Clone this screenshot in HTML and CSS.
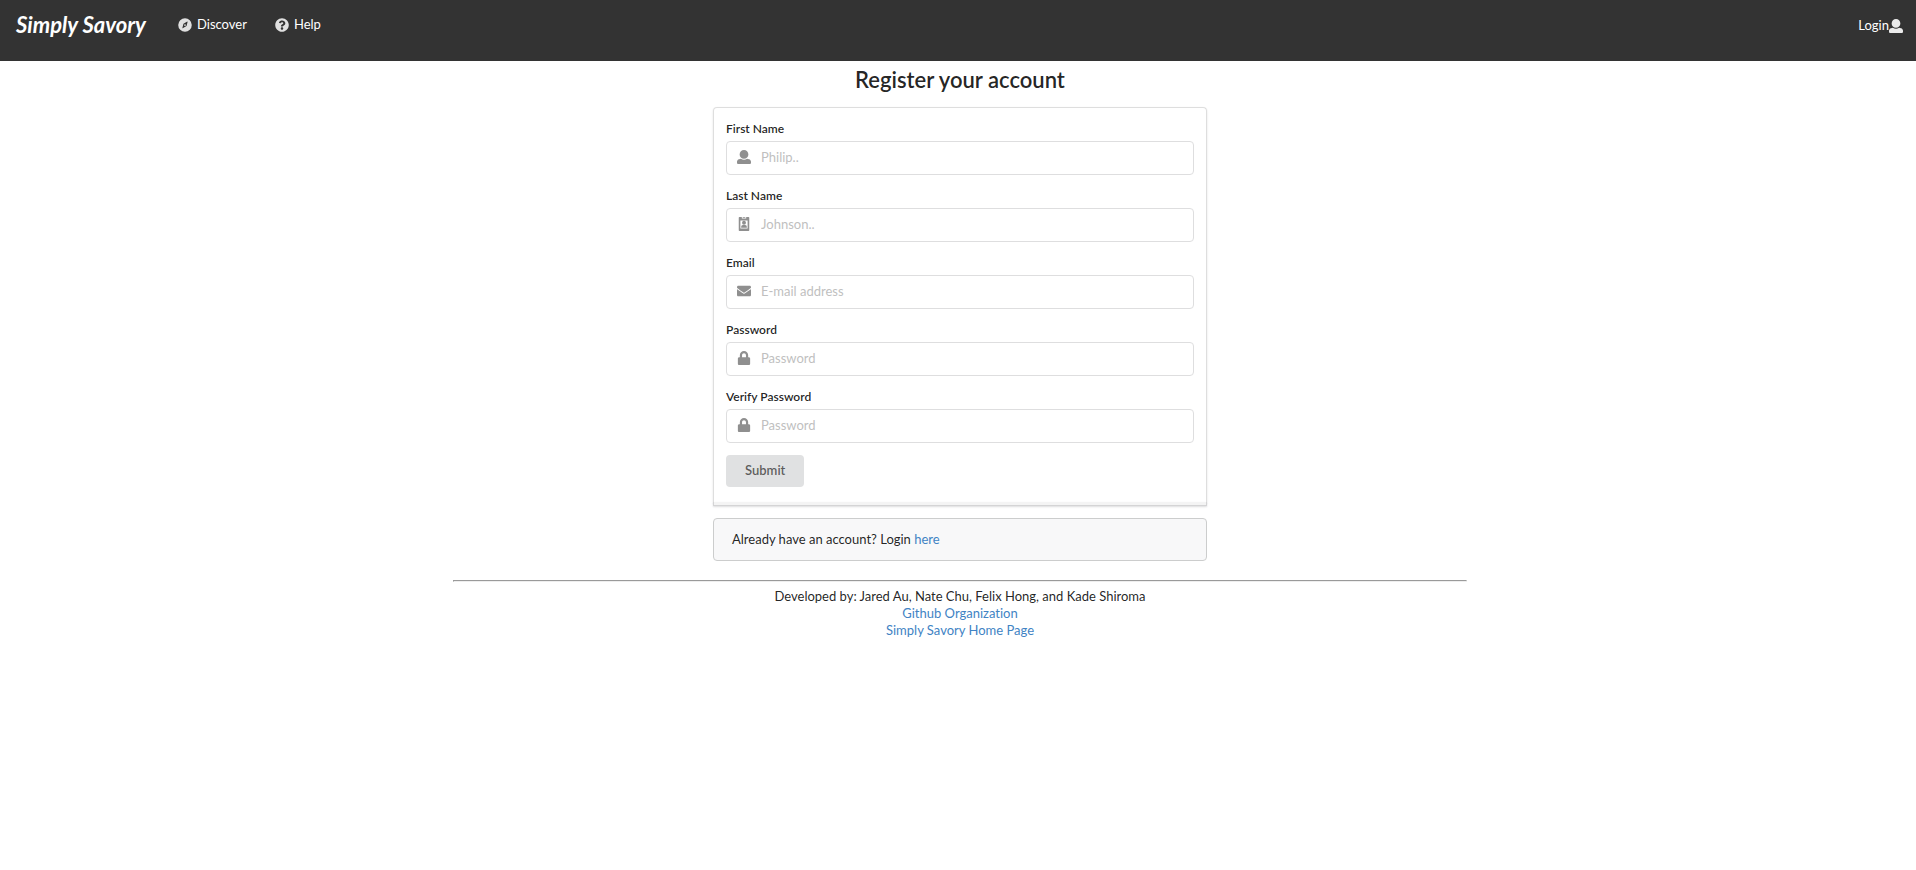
FILE: index.html
```html
<!DOCTYPE html>
<html lang="en">
<head>
<meta charset="utf-8">
<title>Simply Savory</title>
<link rel="stylesheet" href="styles.css">
</head>
<body>
<header class="navbar">
  <a class="brand" href="#">Simply Savory</a>
  <nav class="nav-links">
    <a class="nav-item" href="#"><svg class="icon" viewBox="0 0 512 512" aria-hidden="true"><path fill-rule="evenodd" d="M256 8a248 248 0 1 0 0 496 248 248 0 0 0 0-496zM350 142L312 296 170 376Q154 378 160 362L200 214 338 132Q354 126 350 142zM256 224a32 32 0 1 0 0 64 32 32 0 0 0 0-64z"/></svg>Discover</a>
    <a class="nav-item" href="#"><svg class="icon" viewBox="0 0 512 512" aria-hidden="true"><path d="M504 256c0 136.997-111.043 248-248 248S8 392.997 8 256C8 119.083 119.043 8 256 8s248 111.083 248 248zM262.655 90c-54.497 0-89.255 22.957-116.549 63.758-3.536 5.286-2.353 12.415 2.715 16.258l34.699 26.31c5.205 3.947 12.621 3.008 16.665-2.122 17.864-22.658 30.113-35.797 57.303-35.797 20.429 0 45.698 13.148 45.698 32.958 0 14.976-12.363 22.667-32.534 33.976C247.128 238.528 216 254.941 216 296v4c0 6.627 5.373 12 12 12h56c6.627 0 12-5.373 12-12v-1.333c0-28.462 83.186-29.647 83.186-106.667 0-58.002-60.165-102-116.531-102zM256 338c-25.365 0-46 20.635-46 46 0 25.364 20.635 46 46 46s46-20.636 46-46c0-25.365-20.635-46-46-46z"/></svg>Help</a>
  </nav>
  <a class="login" href="#">Login<svg class="icon-user" viewBox="0 0 512 512" aria-hidden="true"><path d="M256 0c88.366 0 160 71.634 160 160s-71.634 160-160 160S96 248.366 96 160 167.634 0 256 0zm183.283 333.821l-71.313-17.828c-74.923 53.89-165.738 41.864-223.94 0l-71.313 17.828C29.981 344.505 0 382.903 0 426.955V464c0 26.51 21.49 48 48 48h416c26.51 0 48-21.49 48-48v-37.045c0-44.052-29.981-82.45-72.717-93.134z"/></svg></a>
</header>
<main class="page">
  <h2 class="title">Register your account</h2>
  <form class="panel">
    <div class="field">
      <label for="first">First Name</label>
      <div class="control"><svg class="icon" viewBox="0 0 512 512" aria-hidden="true"><path d="M256 0c88.366 0 160 71.634 160 160s-71.634 160-160 160S96 248.366 96 160 167.634 0 256 0zm183.283 333.821l-71.313-17.828c-74.923 53.89-165.738 41.864-223.94 0l-71.313 17.828C29.981 344.505 0 382.903 0 426.955V464c0 26.51 21.49 48 48 48h416c26.51 0 48-21.49 48-48v-37.045c0-44.052-29.981-82.45-72.717-93.134z"/></svg><input id="first" type="text" placeholder="Philip.."></div>
    </div>
    <div class="field">
      <label for="last">Last Name</label>
      <div class="control"><svg class="icon" viewBox="0 0 512 512" aria-hidden="true"><path fill-rule="evenodd" d="M88 0H176V56H336V0H424Q448 0 448 24V488Q448 512 424 512H88Q64 512 64 488V24Q64 0 88 0zM124 124V424H388V124zM256 140a72 72 0 1 1 0 144 72 72 0 0 1 0-144zM152 396V356Q152 296 212 296H300Q360 296 360 356V396zM208 0H304V28H208z"/></svg><input id="last" type="text" placeholder="Johnson.."></div>
    </div>
    <div class="field">
      <label for="email">Email</label>
      <div class="control"><svg class="icon" viewBox="0 0 512 512" aria-hidden="true"><path d="M502.3 190.8c3.9-3.1 9.7-.2 9.7 4.7V400c0 26.5-21.5 48-48 48H48c-26.5 0-48-21.5-48-48V195.6c0-5 5.7-7.800 9.700-4.700 22.400 17.400 52.100 39.500 154.100 113.600 21.100 15.400 56.700 47.800 92.200 47.600 35.700.3 72-32.800 92.300-47.600 102-74.100 131.600-96.300 154-113.700zM256 320c23.200.4 56.600-29.200 73.400-41.400 132.700-96.300 142.800-104.700 173.400-128.700 5.800-4.500 9.200-11.500 9.200-18.900v-19c0-26.500-21.500-48-48-48H48c-26.500 0-48 21.500-48 48v19c0 7.400 3.400 14.300 9.200 18.900 30.600 23.900 40.700 32.400 173.400 128.700 16.800 12.200 50.200 41.800 73.400 41.400z"/></svg><input id="email" type="email" placeholder="E-mail address"></div>
    </div>
    <div class="field">
      <label for="password">Password</label>
      <div class="control"><svg class="icon" viewBox="-32 0 512 512" aria-hidden="true"><path d="M400 224h-24v-72C376 68.200 307.800 0 224 0S72 68.200 72 152v72H48c-26.500 0-48 21.500-48 48v192c0 26.500 21.500 48 48 48h352c26.500 0 48-21.500 48-48V272c0-26.500-21.500-48-48-48zm-104 0H152v-72c0-39.700 32.300-72 72-72s72 32.300 72 72v72z"/></svg><input id="password" type="password" placeholder="Password"></div>
    </div>
    <div class="field">
      <label for="verify">Verify Password</label>
      <div class="control"><svg class="icon" viewBox="-32 0 512 512" aria-hidden="true"><path d="M400 224h-24v-72C376 68.200 307.800 0 224 0S72 68.200 72 152v72H48c-26.500 0-48 21.500-48 48v192c0 26.500 21.500 48 48 48h352c26.500 0 48-21.500 48-48V272c0-26.500-21.500-48-48-48zm-104 0H152v-72c0-39.700 32.300-72 72-72s72 32.300 72 72v72z"/></svg><input id="verify" type="password" placeholder="Password"></div>
    </div>
    <button class="submit" type="submit">Submit</button>
  </form>
  <p class="message">Already have an account? Login <a href="#">here</a></p>
</main>
<footer class="footer">
  <hr>
  <p>Developed by: Jared Au, Nate Chu, Felix Hong, and Kade Shiroma</p>
  <a href="#">Github Organization</a>
  <a href="#">Simply Savory Home Page</a>
</footer>
</body>
</html>
```
FILE: styles.css
```css
* { box-sizing: border-box; }
body {
  margin: 0;
  background: #fff;
  color: rgba(0, 0, 0, .87);
  font: 13px/17px Lato, "Liberation Sans", sans-serif;
  font-variant-ligatures: none;
}
a { color: #4183c4; text-decoration: none; }
.navbar {
  display: flex;
  align-items: flex-start;
  height: 61px;
  padding: 8px 13px 0 16px;
  background: #333;
}
.navbar a { color: #fff; }
.navbar .brand {
  width: 162px;
  font-size: 22px;
  line-height: 34px;
  font-weight: 700;
  font-style: italic;
}
.nav-links { display: flex; gap: 28px; padding-top: 8px; }
.nav-item { display: flex; align-items: center; gap: 5px; }
.icon { width: 14px; height: 14px; fill: currentColor; }
.navbar .icon { opacity: .85; }
.login { display: flex; align-items: center; margin-left: auto; padding-top: 9px; }
.icon-user { width: 14px; height: 14px; fill: currentColor; opacity: .9; }
.page {
  width: 100%;
  max-width: 498px;
  margin: 0 auto;
  padding: 5px 0 0 4px;
}
.title {
  margin: 0 0 13px;
  font-size: 22px;
  line-height: 28px;
  font-weight: 600;
  text-align: center;
}
.panel {
  position: relative;
  padding: 12px 12px 15px;
  border: 1px solid #dedede;
  border-bottom-color: #d4d4d5;
  border-radius: 4px 4px 0 0;
  box-shadow: 0 1px 2px rgba(34, 36, 38, .15);
  margin: 0 0 15px;
}
.panel::after {
  content: "";
  position: absolute;
  inset: auto -1px -4px;
  height: 3px;
  border: 1px solid #d4d4d5;
  border-top: 0;
  background: #f4f4f4;
  box-shadow: 0 1px 2px rgba(34, 36, 38, .15);
}
.field { margin-bottom: 12px; }
.field label {
  display: block;
  margin-bottom: 4px;
  font-size: 12px;
  font-weight: 600;
}
.control { display: grid; align-items: center; }
.control .icon {
  grid-area: 1 / 1;
  z-index: 1;
  margin: 0 0 2px 11px;
  opacity: .5;
}
.control input {
  grid-area: 1 / 1;
  width: 100%;
  height: 34px;
  padding: 0 13px 2px 34px;
  border: 1px solid #dededf;
  border-radius: 4px;
  font: inherit;
}
.control input::placeholder { color: #bfbfbf; }
.submit {
  height: 32px;
  padding: 0 19px 1px;
  border: 0;
  border-radius: 4px;
  background: #e0e1e2;
  color: rgba(0, 0, 0, .6);
  font: inherit;
  font-weight: 600;
  display: block;
}
.message {
  margin: 0;
  padding: 12px 18px;
  border: 1px solid #cccdcd;
  border-radius: 4px;
  background: #f8f8f9;
}
.footer {
  display: flex;
  flex-direction: column;
  align-items: center;
  padding: 19px 0 0 4px;
}
.footer hr {
  width: 53%;
  margin: 0 0 6px;
  border: 1px solid #9a9a9a;
  border-bottom-color: #eee;
  border-right-color: #eee;
}
.footer p { margin: 0; }
```
